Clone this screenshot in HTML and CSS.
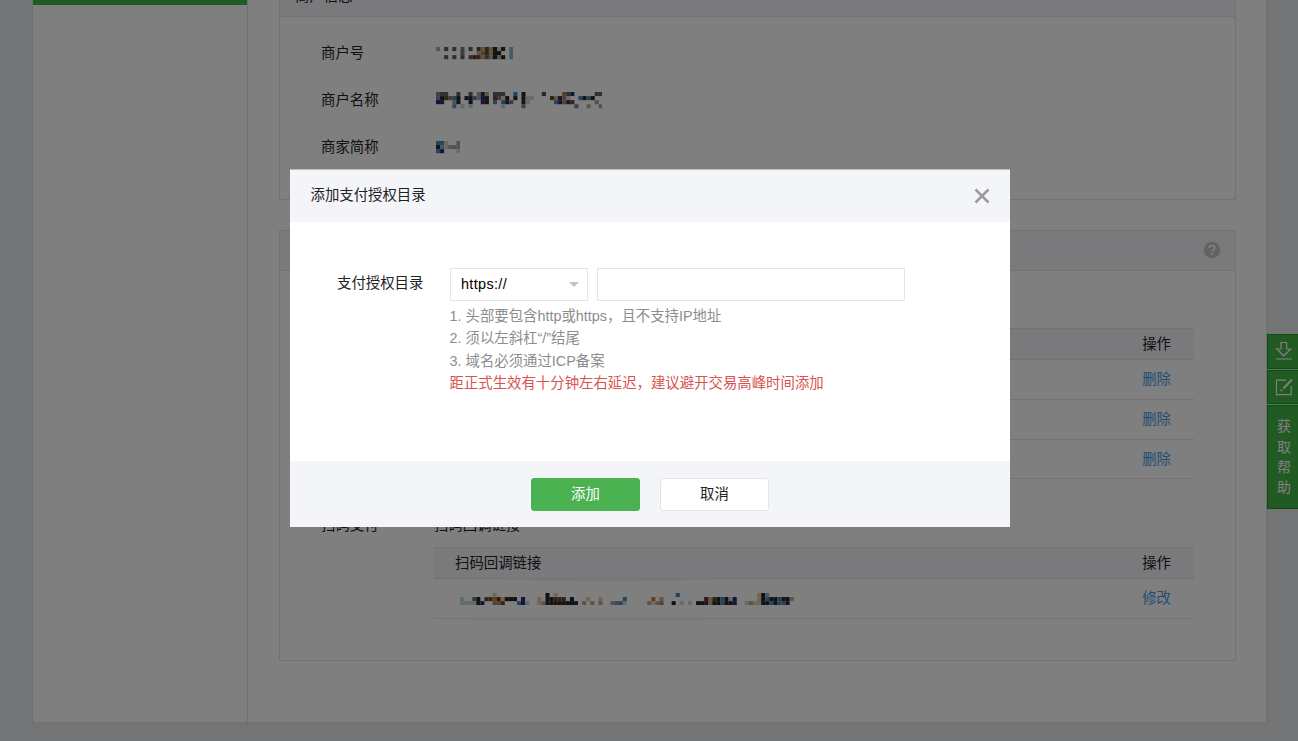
FILE: index.html
```html
<!DOCTYPE html>
<html lang="zh-CN">
<head>
  <meta charset="UTF-8" />
  <meta name="viewport" content="width=device-width, initial-scale=1.0"/>
  <title>添加支付授权目录</title>
  <link rel="stylesheet" href="styles.css">
</head>
<body>
  <div class="container">
    <aside class="sidebar">
      <div class="menu-active"></div>
    </aside>

    <main class="content">
      <section class="panel panel-info">
        <h2 class="panel-head">商户信息</h2>
        <div class="info-list">
          <div class="info-row"><span class="info-label">商户号</span><svg class="mosaic" data-mosaic="id"></svg></div>
          <div class="info-row"><span class="info-label">商户名称</span><svg class="mosaic" data-mosaic="name"></svg></div>
          <div class="info-row"><span class="info-label">商家简称</span><svg class="mosaic" data-mosaic="short"></svg></div>
        </div>
      </section>

      <section class="panel panel-pay">
        <div class="panel-head">
          <svg class="help" viewBox="0 0 18 18">
            <circle cx="9" cy="9" r="8.3" fill="#c6c6c6"/>
            <path d="M6.3 7.1c0-1.6 1.1-2.5 2.7-2.5s2.8.9 2.8 2.3c0 1.8-2.6 1.8-2.6 3.8M9.2 12v1.9" fill="none" stroke="#fff" stroke-width="1.8"/>
          </svg>
        </div>

        <div class="group group-auth">
          <div class="group-body">
            <div class="table">
              <div class="tr th"><span></span><span>操作</span></div>
              <div class="tr"><span></span><a>删除</a></div>
              <div class="tr"><span></span><a>删除</a></div>
              <div class="tr last"><span></span><a>删除</a></div>
            </div>
          </div>
        </div>

        <div class="group group-scan">
          <div class="group-label">扫码支付</div>
          <div class="group-body">
            <div class="group-title">扫码回调链接</div>
            <div class="table">
              <div class="tr th smear-top"><span>扫码回调链接</span><span>操作</span></div>
              <div class="tr smear-bottom"><svg class="mosaic mosaic-link" data-mosaic="link"></svg><a>修改</a></div>
            </div>
          </div>
        </div>
      </section>
    </main>
  </div>

  <div class="side-tool">
    <div class="tool">
      <svg viewBox="0 0 18 20"><path d="M6 1.5h5.600v6.500h4.200L8.800 14.800 1.800 8H6zM1 18h16" fill="none" stroke="#fff" stroke-width="1.200"/></svg>
    </div>
    <div class="tool">
      <svg viewBox="0 0 18 20"><path d="M11 3.200H1.500v14.500h14.700V9" fill="none" stroke="#fff" stroke-width="1.200"/><path d="M16.800 2.800L8.300 11.500M6.800 12.800l-1 1.200" fill="none" stroke="#fff" stroke-width="2"/></svg>
    </div>
    <div class="tool tool-help">获<br>取<br>帮<br>助</div>
  </div>

  <div class="overlay">
    <div class="dialog">
      <div class="dialog-head">
        <span>添加支付授权目录</span>
        <svg class="close" viewBox="0 0 16 16"><path d="M1.500 1.500l13 13M14.500 1.500l-13 13" stroke="#9b9b9b" stroke-width="2.500"/></svg>
      </div>
      <div class="dialog-body">
        <label class="field-label">支付授权目录</label>
        <div class="field">
          <div class="field-row">
            <div class="select">https://<i class="arrow"></i></div>
            <input class="input" type="text">
          </div>
          <div class="tips">
            <p>1. 头部要包含http或https，且不支持IP地址</p>
            <p>2. 须以左斜杠“/”结尾</p>
            <p>3. 域名必须通过ICP备案</p>
            <p class="warn">距正式生效有十分钟左右延迟，建议避开交易高峰时间添加</p>
          </div>
        </div>
      </div>
      <div class="dialog-foot">
        <button class="btn btn-primary">添加</button>
        <button class="btn">取消</button>
      </div>
    </div>
  </div>

  <script src="mosaic.js"></script>
</body>
</html>
```
FILE: styles.css
```css
* {
  box-sizing: border-box;
}

body {
  margin: 0;
  height: 741px;
  overflow: hidden;
  background: #e7e8eb;
  color: #222;
  font: 14.4px/22.4px "Liberation Sans", "Noto Sans CJK SC", sans-serif;
}

h2,
p {
  margin: 0;
  font-size: inherit;
  font-weight: normal;
}

.container {
  display: flex;
  width: 1235px;
  height: 723px;
  margin-left: 32px;
  overflow: hidden;
  background: #fff;
  border: 1px solid #dddee2;
  border-top: 0;
}

.sidebar {
  width: 215px;
  border-right: 1px solid #e0e1e6;
}

.menu-active {
  height: 5px;
  background: #44b549;
}

.content {
  flex: 1;
  padding: 0 30px 0 31px;
}

/* panels */
.panel {
  width: 957px;
  border: 1px solid #e4e5ea;
}

.panel-info {
  height: 224px;
  margin-top: -24px;
}

.panel-pay {
  height: 431px;
  margin-top: 30px;
}

.panel-head {
  display: flex;
  align-items: center;
  height: 40px;
  padding: 0 15px;
  background: #f4f5f9;
  border-bottom: 1px solid #e4e5ea;
}

.help {
  width: 18px;
  height: 18px;
  margin-left: auto;
}

.panel-pay .panel-head {
  padding: 0 14px 1px 15px;
}

.info-list {
  padding: 13px 0 0 41px;
}

.info-row {
  display: flex;
  align-items: center;
  height: 47px;
}

.info-label {
  width: 114.5px;
}

.mosaic {
  display: block;
}

/* payment groups */
.group {
  display: flex;
  padding-left: 41px;
}

.group-auth {
  justify-content: flex-end;
  padding: 57px 41px 0 0;
}

.group-scan {
  padding-top: 35px;
}

.group-label {
  width: 113px;
}

.group-title {
  height: 33px;
}

.table {
  width: 760px;
}

.tr {
  display: flex;
  align-items: center;
  justify-content: space-between;
  height: 40px;
  padding: 0 23px 0 21px;
  border-bottom: 1px solid #e4e5ea;
}

.tr.th {
  height: 32px;
  background: #f4f5f9;
  border-top: 1px solid #e4e5ea;
}

.tr.last {
  height: 39px;
}

.tr a {
  color: #459ae9;
}

.smear-top,
.smear-bottom {
  position: relative;
}

.smear-top::after,
.smear-bottom::after {
  content: "";
  position: absolute;
  left: 70px;
  top: 29px;
  width: 210px;
  height: 4px;
  border-radius: 50%;
  background: #eff0f4;
}

.smear-bottom::after {
  left: 35px;
  top: 38px;
  width: 235px;
}

.mosaic-link {
  margin: 1px 0 0 5px;
}

/* right side toolbar */
.side-tool {
  position: fixed;
  top: 334px;
  right: 0;
  width: 31px;
  display: flex;
  flex-direction: column;
  gap: 1px;
  background: #c9dfca;
  color: #fff;
}

.tool {
  display: flex;
  align-items: center;
  justify-content: center;
  height: 34.5px;
  padding-left: 2px;
  background: #44b549;
  border: 1px solid #179b16;
  border-right: 0;
}

.tool svg {
  width: 18px;
  height: 20px;
}

.tool-help {
  height: 104px;
  font-size: 14px;
  line-height: 20.4px;
}

/* dialog */
.overlay {
  position: fixed;
  inset: 0;
  display: flex;
  justify-content: center;
  align-items: flex-start;
  padding: 169px 0 0 2px;
  background: rgba(0, 0, 0, 0.5);
}

.dialog {
  width: 720px;
  background: #fff;
  color: #222;
}

.dialog-head {
  display: flex;
  align-items: center;
  justify-content: space-between;
  height: 53px;
  padding: 0 20.5px 1px;
  background: #f4f5f9;
  border-top: 1px solid #bdbdbf;
}

.close {
  width: 16px;
  height: 16px;
}

.dialog-body {
  display: flex;
  height: 239px;
  padding: 46px 0 0 47px;
}

.field-label {
  width: 113px;
  padding-top: 4px;
}

.field-row {
  display: flex;
  gap: 9px;
}

.select,
.input {
  height: 33px;
  border: 1px solid #e4e5ea;
  background: #fff;
}

.select {
  display: flex;
  align-items: center;
  justify-content: space-between;
  width: 138px;
  padding: 0 8px 0 10px;
  color: #000;
  letter-spacing: 0.35px;
}

.arrow {
  border: 5px solid transparent;
  border-top-color: #c2c2c2;
  border-bottom: 0;
}

.input {
  width: 308px;
  padding: 0 10px;
  border-radius: 0;
}

.tips {
  margin-left: -0.5px;
  padding-top: 4px;
  color: #8d8d8d;
}

.tips .warn {
  color: #d9534f;
}

.dialog-foot {
  display: flex;
  justify-content: center;
  gap: 20px;
  height: 66px;
  padding-top: 17px;
  background: #f4f5f9;
}

.btn {
  width: 109px;
  height: 32.5px;
  padding: 0;
  border: 1px solid #e4e5ea;
  border-radius: 3px;
  background: #fff;
  color: #222;
  font: inherit;
}

.btn-primary {
  border-color: #4ab250;
  background: #4ab250;
  color: #fff;
}
```
FILE: mosaic.js
```js
// pixelated values, one letter per cell
const colors = {
  k: '#242426', g: '#606060', G: '#a4a4a4', s: '#d2d2d2', m: '#8a7478',
  b: '#684428', o: '#b08050', t: '#c4a488', y: '#e2cfa4', r: '#702418',
  n: '#242c68', c: '#4c86b4', l: '#80b4d8', a: '#bcd8e0', p: '#7c84b0'
};

const mosaics = {
  id: [
    't.g.g.m.g.btbtksk.l',
    '......m...tobtkk..l',
    '..g.g.g.grbtgtktk.l'
  ],
  name: [
    'pgg..g..g.Gnt.ggg..c.k....b....ogn.....gg',
    'pkbmck.kkcGnk.bmsk.k.kss....btnos..ckck..',
    'nn..lk..k..nk.c.cnm..ky......cnonb.....G.',
    '....p.a.a.......s....p............p..t..G'
  ],
  short: [
    'ccy..G',
    'klstGG',
    'cn...s'
  ],
  link: [
    '........y............k.y.............................c...................ykl......',
    'a..ck.bborykkk.n...y.kkbbb.k...y..y.....c......o.t..........rtbkckan.....ykckkckkt',
    'assskn..oob...cna..ytkkkkkkkn.t.t.t..Gpca.....tyto..k.s.s.kkntkkckkn..ytyykkckccn.'
  ]
};

const cell = 4.07;

document.querySelectorAll('.mosaic').forEach(svg => {
  const rows = mosaics[svg.dataset.mosaic];
  svg.setAttribute('width', rows[0].length * cell);
  svg.setAttribute('height', rows.length * cell);
  rows.forEach((row, y) => {
    [...row].forEach((key, x) => {
      if (!colors[key]) return;
      const rect = document.createElementNS('http://www.w3.org/2000/svg', 'rect');
      rect.setAttribute('x', x * cell);
      rect.setAttribute('y', y * cell);
      rect.setAttribute('width', cell);
      rect.setAttribute('height', cell);
      rect.setAttribute('fill', colors[key]);
      svg.appendChild(rect);
    });
  });
});
```
